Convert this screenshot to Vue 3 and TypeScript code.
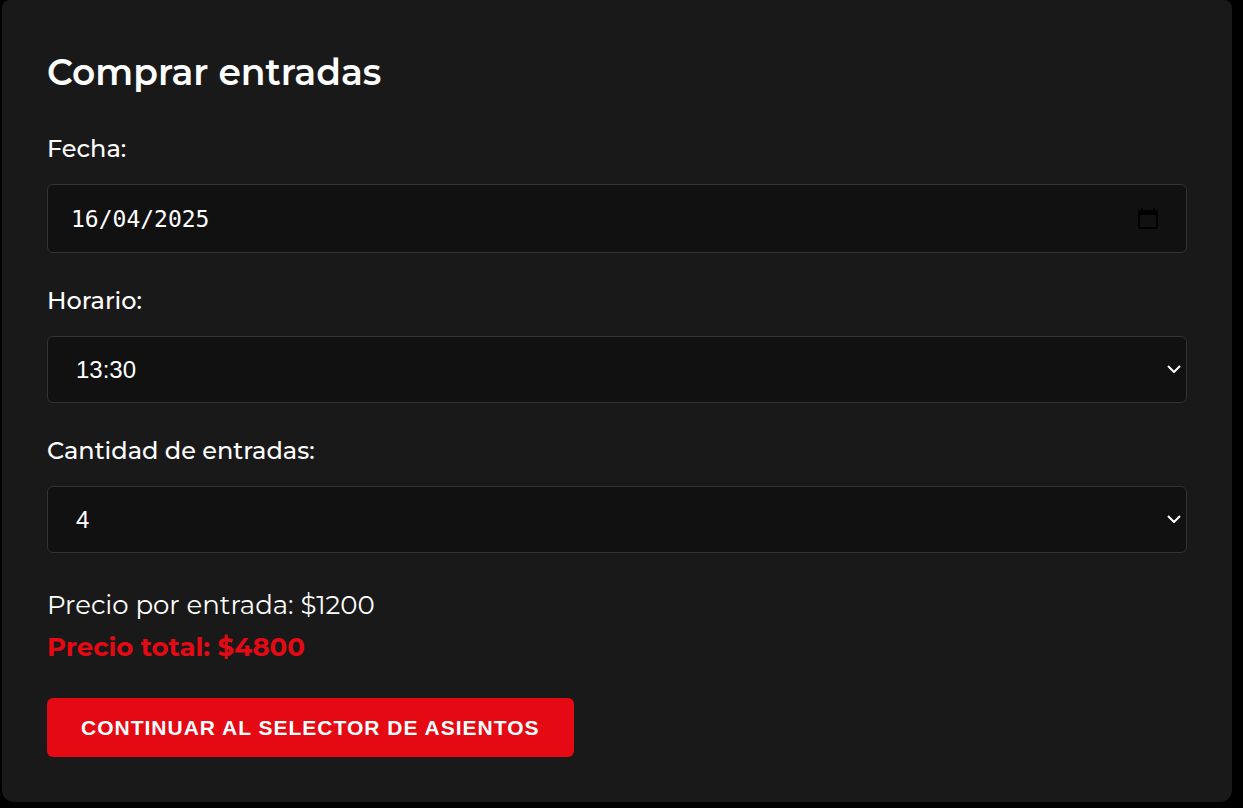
<script setup lang="ts">
import { computed, ref } from 'vue'

const date = ref('16/04/2025')
const time = ref('13:30')
const quantity = ref(4)
const unitPrice = 1200
const times = ['13:30', '16:00', '19:00', '22:00']
const total = computed(() => unitPrice * quantity.value)
</script>

<template>
  <main class="page">
    <form class="card" @submit.prevent>
      <h1>Comprar entradas</h1>
      <div class="fields">
        <div>
          <label for="date">Fecha:</label>
          <div class="control">
            <input id="date" v-model="date" class="field date" type="text" inputmode="numeric" />
            <svg class="calendar" viewBox="0 0 20 21" aria-hidden="true">
              <path fill="#000" fill-rule="evenodd" d="M3 0h2v2h10V0h2v2h1.500a1.500 1.500 0 0 1 1.500 1.500v16a1.500 1.500 0 0 1-1.500 1.500h-17A1.500 1.500 0 0 1 0 19.500v-16A1.500 1.500 0 0 1 1.500 2H3zM2 7v12h16V7z" />
            </svg>
          </div>
        </div>
        <div>
          <label for="time">Horario:</label>
          <div class="control">
            <select id="time" v-model="time" class="field select">
              <option v-for="t in times" :key="t" :value="t">{{ t }}</option>
            </select>
            <svg class="chevron" viewBox="0 0 14 8" aria-hidden="true">
              <path d="M1 1l6 6 6-6" fill="none" stroke="#fff" stroke-width="2" />
            </svg>
          </div>
        </div>
        <div>
          <label for="quantity">Cantidad de entradas:</label>
          <div class="control">
            <select id="quantity" v-model="quantity" class="field select">
              <option v-for="n in 8" :key="n" :value="n">{{ n }}</option>
            </select>
            <svg class="chevron" viewBox="0 0 14 8" aria-hidden="true">
              <path d="M1 1l6 6 6-6" fill="none" stroke="#fff" stroke-width="2" />
            </svg>
          </div>
        </div>
      </div>
      <div class="prices">
        <p>Precio por entrada: ${{ unitPrice }}</p>
        <p class="total">Precio total: ${{ total }}</p>
      </div>
      <button type="submit">CONTINUAR AL SELECTOR DE ASIENTOS</button>
    </form>
  </main>
</template>

<style>
body {
  background: #000;
}
</style>

<style scoped>
.page {
  padding: 0 11px 6px 2px;
  color: #fff;
  font-family: Montserrat, 'Open Sans', sans-serif;
}
.card {
  padding: 48px 45px 45px;
  border-radius: 8px 8px 12px 12px;
  background: #191919;
}
h1 {
  margin: 0 0 39px;
  font-size: 36px;
  line-height: 48px;
  font-weight: 600;
}
.fields {
  display: grid;
  gap: 34px;
  margin-bottom: 31px;
}
label {
  display: block;
  margin-bottom: 21px;
  font-size: 24px;
  line-height: 28px;
  font-weight: 500;
}
.control {
  position: relative;
}
.field {
  display: block;
  box-sizing: border-box;
  width: 100%;
  height: 67px;
  border: 1px solid #333;
  border-radius: 6px;
  background: #111;
  color: #fff;
  font: 24px 'Liberation Sans', sans-serif;
}
.date {
  height: 69px;
  padding: 0 23px;
  font-family: 'DejaVu Sans Mono', monospace;
  font-size: 23px;
}
.select {
  appearance: none;
  padding: 0 28px;
}
.calendar {
  position: absolute;
  top: 24px;
  right: 29px;
  width: 20px;
  height: 21px;
}
.chevron {
  position: absolute;
  top: 29px;
  right: 6px;
  width: 14px;
  height: 8px;
}
.prices {
  margin-bottom: 30px;
  font-size: 26px;
  line-height: 42px;
}
p {
  margin: 0;
}
.total {
  color: #e50914;
  font-weight: 700;
}
button {
  display: block;
  height: 59px;
  padding: 0 34px;
  border: 0;
  border-radius: 6px;
  background: #e50914;
  color: #fff;
  font: bold 21px 'Liberation Sans', sans-serif;
  letter-spacing: 1px;
}
</style>
